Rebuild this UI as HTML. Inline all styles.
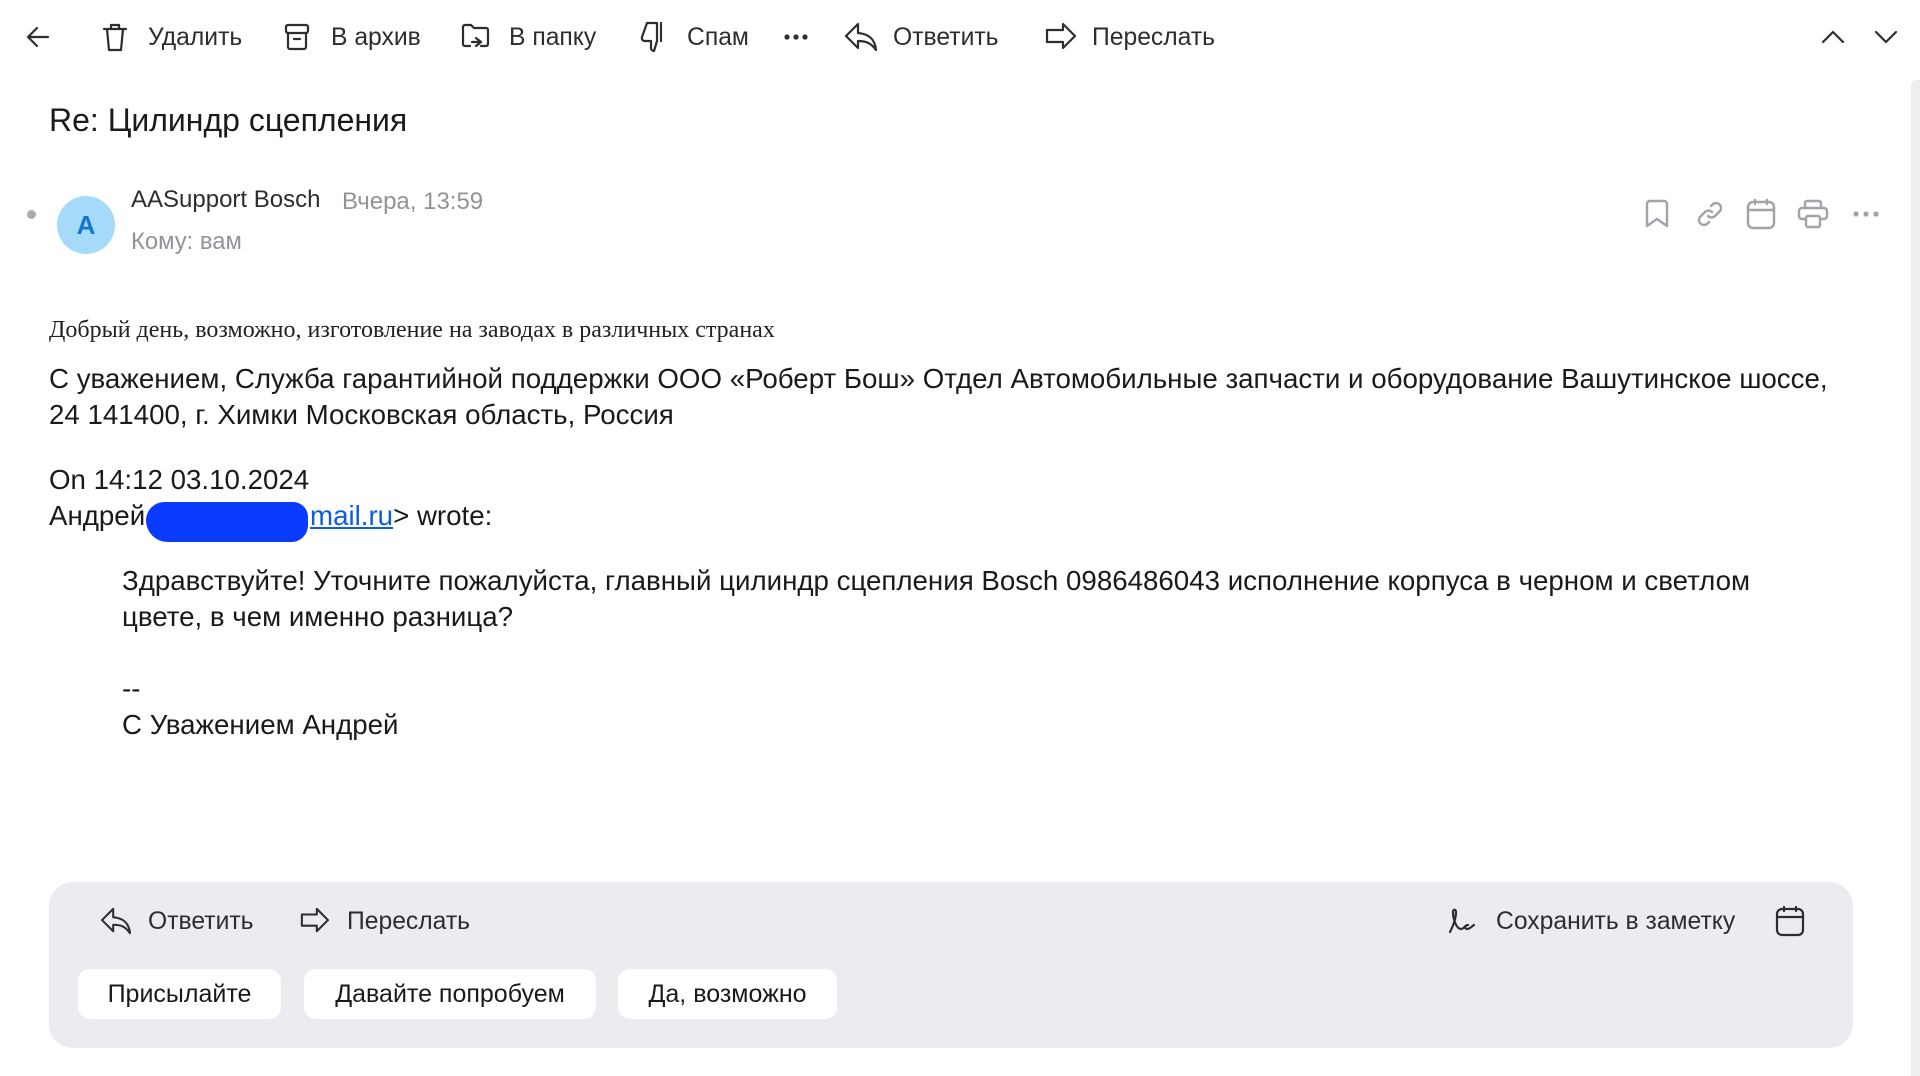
<!DOCTYPE html>
<html><head><meta charset="utf-8">
<style>
*{margin:0;padding:0;box-sizing:border-box}
body{width:1920px;height:1076px;background:#fff;position:relative;overflow:hidden;font-family:"Liberation Sans",Arial,sans-serif;color:#2c2d2e}
.a{position:absolute;white-space:nowrap}
.tb{font-size:24.7px;top:24px;color:#2c2d2e}
svg{position:absolute;overflow:visible}
.ic{fill:none;stroke:#2c2d2e;stroke-width:2.2;stroke-linecap:round;stroke-linejoin:round}
.gi{fill:none;stroke:#a0a3a8;stroke-width:2.4;stroke-linecap:round;stroke-linejoin:round}
.body{font-size:27.7px;color:#1a1a1a}
.btn{position:absolute;top:969px;height:50px;background:#fff;border-radius:12px;font-size:25px;line-height:50px;text-align:center;color:#1a1a1a}
</style></head><body>

<!-- toolbar -->
<svg class="ic" style="left:26px;top:26px" width="24" height="22" viewBox="0 0 24 22"><path d="M22 11H3M11 2L2 11l9 9"/></svg>
<svg class="ic" style="left:101px;top:22px" width="28" height="30" viewBox="0 0 28 30"><path d="M3 7h22M10 7V3h8v4M6 7l2 21h12l2-21"/></svg>
<div class="a tb" style="left:148px">Удалить</div>
<svg class="ic" style="left:283px;top:23px" width="28" height="28" viewBox="0 0 28 28"><rect x="3" y="2" width="22" height="8" rx="2"/><path d="M5 10v14a2 2 0 002 2h14a2 2 0 002-2V10M11 16h6"/></svg>
<div class="a tb" style="left:331px">В архив</div>
<svg class="ic" style="left:460px;top:22px" width="32" height="32" viewBox="0 0 32 32"><path d="M10 24H5a2 2 0 01-2-2V5a2 2 0 012-2h6l3 3h12a2 2 0 012 2v14a2 2 0 01-2 2h-5M12 20h9M16 16l5 4-5 4"/></svg>
<div class="a tb" style="left:509px">В папку</div>
<svg class="ic" style="left:639px;top:20px" width="30" height="34" viewBox="0 0 30 34"><path d="M22 3v18M18 3H8L3 17a3 3 0 003 4h6v7a3 3 0 003 3l3-10V3"/></svg>
<div class="a tb" style="left:687px">Спам</div>
<svg style="left:784px;top:34px" width="24" height="6" viewBox="0 0 24 6"><circle cx="3" cy="3" r="2.6" fill="#2c2d2e"/><circle cx="12" cy="3" r="2.6" fill="#2c2d2e"/><circle cx="21" cy="3" r="2.6" fill="#2c2d2e"/></svg>
<svg class="ic" style="left:844px;top:22px" width="34" height="30" viewBox="0 0 34 30"><path d="M14 2L2 14l12 12v-7c8 0 13 2 18 9-1-10-6-16-18-17z"/></svg>
<div class="a tb" style="left:893px">Ответить</div>
<svg class="ic" style="left:1043px;top:22px" width="34" height="30" viewBox="0 0 34 30"><path d="M20 2l12 12-12 12v-6H4V8h16z"/></svg>
<div class="a tb" style="left:1092px">Переслать</div>
<svg class="ic" style="left:1821px;top:30px" width="24" height="14" viewBox="0 0 24 14"><path d="M2 12L12 2l10 10"/></svg>
<svg class="ic" style="left:1874px;top:30px" width="24" height="14" viewBox="0 0 24 14"><path d="M2 2l10 10L22 2"/></svg>

<!-- scrollbar -->
<div class="a" style="left:1911px;top:80px;width:9px;height:996px;background:#eceef0;border-radius:6px 0 0 0"></div>

<!-- title -->
<div class="a" style="left:49px;top:102px;font-size:32px;color:#1a1a1a">Re: Цилиндр сцепления</div>

<!-- sender -->
<div class="a" style="left:27px;top:210px;width:9px;height:9px;border-radius:50%;background:#a8abb0"></div>
<div class="a" style="left:57px;top:196px;width:58px;height:58px;border-radius:50%;background:#a6dafb;color:#1377d0;font-size:26px;font-weight:bold;text-align:center;line-height:58px">A</div>
<div class="a" style="left:131px;top:186px;font-size:24px;color:#2c2d2e">AASupport Bosch</div>
<div class="a" style="left:342px;top:188px;font-size:24px;color:#919399">Вчера, 13:59</div>
<div class="a" style="left:131px;top:228px;font-size:23.8px;color:#919399">Кому: вам</div>

<svg class="gi" style="left:1644px;top:199px" width="26" height="30" viewBox="0 0 26 30"><path d="M3 27V5a3 3 0 013-3h14a3 3 0 013 3v22l-10-7z"/></svg>
<svg class="gi" style="left:1695px;top:199px" width="30" height="30" viewBox="0 0 30 30"><path d="M13 17a5 5 0 007 0l5-5a5 5 0 00-7-7l-2 2M17 13a5 5 0 00-7 0l-5 5a5 5 0 007 7l2-2"/></svg>
<svg class="gi" style="left:1746px;top:198px" width="30" height="32" viewBox="0 0 30 32"><rect x="2" y="4" width="26" height="26" rx="5"/><path d="M2 12h26M9 2v4M21 2v4"/></svg>
<svg class="gi" style="left:1797px;top:199px" width="32" height="30" viewBox="0 0 32 30"><path d="M8 20H5a3 3 0 01-3-3v-5a3 3 0 013-3h22a3 3 0 013 3v5a3 3 0 01-3 3h-3M8 9V4a2 2 0 012-2h12a2 2 0 012 2v5"/><rect x="9" y="17" width="14" height="11" rx="2"/></svg>
<svg style="left:1853px;top:211px" width="26" height="6" viewBox="0 0 26 6"><circle cx="3" cy="3" r="2.6" fill="#a0a3a8"/><circle cx="13" cy="3" r="2.6" fill="#a0a3a8"/><circle cx="23" cy="3" r="2.6" fill="#a0a3a8"/></svg>

<!-- body -->
<div class="a" style="left:49px;top:317px;font-family:'Liberation Serif',serif;font-size:24px;color:#222">Добрый день, возможно, изготовление на заводах в различных странах</div>
<div class="a body" style="left:49px;top:363px">С уважением, Служба гарантийной поддержки ООО «Роберт Бош» Отдел Автомобильные запчасти и оборудование Вашутинское шоссе,</div>
<div class="a body" style="left:49px;top:399px">24 141400, г. Химки Московская область, Россия</div>
<div class="a body" style="left:49px;top:464px">On 14:12 03.10.2024</div>
<div class="a body" style="left:49px;top:500px">Андрей</div>
<div class="a body" style="left:310px;top:500px"><span style="color:#0a5fd8;text-decoration:underline">mail.ru</span>&gt; wrote:</div>
<div class="a" style="left:146px;top:502px;width:162px;height:40px;background:#0a3cff;border-radius:22px 18px 20px 26px"></div>
<div class="a body" style="left:122px;top:565px">Здравствуйте! Уточните пожалуйста, главный цилиндр сцепления Bosch 0986486043 исполнение корпуса в черном и светлом</div>
<div class="a body" style="left:122px;top:601px">цвете, в чем именно разница?</div>
<div class="a body" style="left:122px;top:673px">--</div>
<div class="a body" style="left:122px;top:709px">С Уважением Андрей</div>

<!-- bottom panel -->
<div class="a" style="left:49px;top:882px;width:1804px;height:166px;background:#ebecf0;border-radius:24px"></div>
<svg class="ic" style="left:100px;top:907px" width="32" height="28" viewBox="0 0 34 30"><path d="M14 2L2 14l12 12v-7c8 0 13 2 18 9-1-10-6-16-18-17z"/></svg>
<div class="a tb" style="left:148px;top:908px">Ответить</div>
<svg class="ic" style="left:298px;top:907px" width="32" height="28" viewBox="0 0 34 30"><path d="M20 2l12 12-12 12v-6H4V8h16z"/></svg>
<div class="a tb" style="left:347px;top:908px">Переслать</div>
<svg class="ic" style="left:1447px;top:906px" width="32" height="30" viewBox="0 0 32 30"><path d="M3 26c3-6 6-14 6-20 0-3-3-3-3 0 0 6 3 17 8 17 3 0 4-4 7-4-3 0-4 4-1 4 3 0 5-3 7-4"/></svg>
<div class="a tb" style="left:1496px;top:908px">Сохранить в заметку</div>
<svg class="ic" style="left:1775px;top:905px" width="30" height="32" viewBox="0 0 30 32"><rect x="2" y="4" width="26" height="26" rx="5"/><path d="M2 12h26M9 2v4M21 2v4"/></svg>

<div class="btn" style="left:78px;width:203px">Присылайте</div>
<div class="btn" style="left:304px;width:292px">Давайте попробуем</div>
<div class="btn" style="left:618px;width:219px">Да, возможно</div>
</body></html>
